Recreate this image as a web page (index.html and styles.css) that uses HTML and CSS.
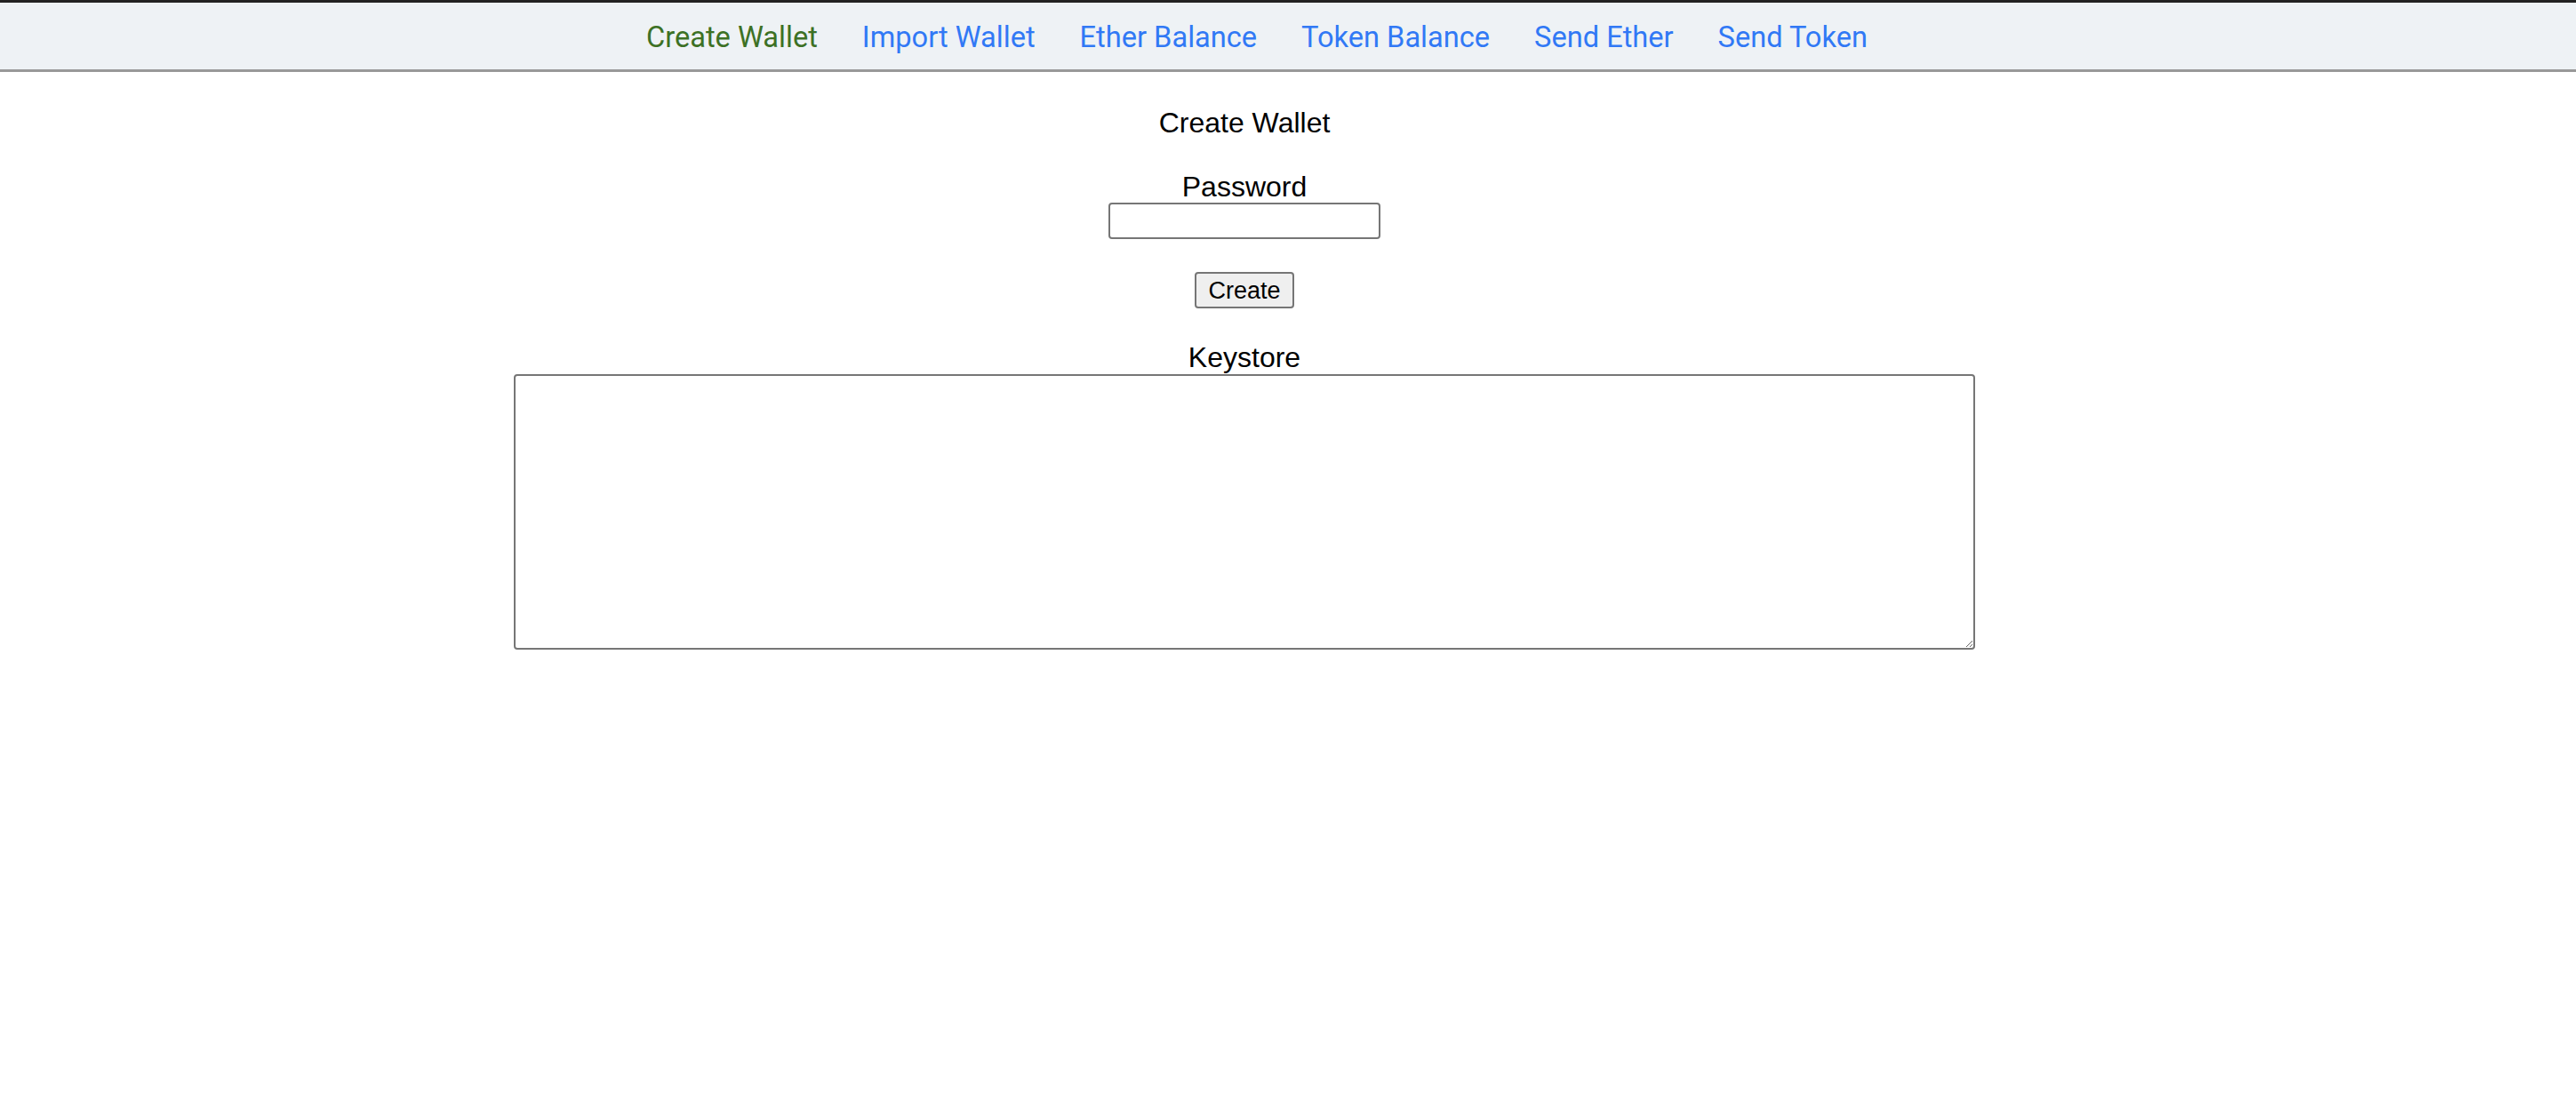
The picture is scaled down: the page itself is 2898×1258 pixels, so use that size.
FILE: index.html
```html
<!DOCTYPE html>
<html>
<head>
<meta charset="utf-8">
<title>Wallet</title>
<link rel="stylesheet" href="styles.css">
</head>
<body>
<nav class="nav">
  <a class="nav-link active" href="#">Create Wallet</a>
  <a class="nav-link" href="#">Import Wallet</a>
  <a class="nav-link" href="#">Ether Balance</a>
  <a class="nav-link" href="#">Token Balance</a>
  <a class="nav-link" href="#">Send Ether</a>
  <a class="nav-link" href="#">Send Token</a>
</nav>
<main class="main">
  <h1 class="title">Create Wallet</h1>
  <label class="label" for="pw">Password</label>
  <input class="input" id="pw" type="password">
  <button class="btn">Create</button>
  <label class="label keystore-label" for="ks">Keystore</label>
  <textarea class="textarea" id="ks"></textarea>
</main>
</body>
</html>
```
FILE: styles.css
```css
html, body {
  margin: 0;
  padding: 0;
  background: #ffffff;
}
body {
  font-family: "Liberation Sans", Arial, sans-serif;
  color: #000;
}
.nav {
  display: flex;
  align-items: center;
  gap: 50px;
  box-sizing: border-box;
  height: 81px;
  padding-left: 727px;
  padding-top: 3px;
  background: #eef2f5;
  border-top: 3px solid #222222;
  border-bottom: 3px solid #999999;
  font-family: Roboto, "Liberation Sans", sans-serif;
  font-size: 32.6px;
}
.nav-link {
  color: #3179f5;
  text-decoration: none;
  line-height: 40px;
}
.nav-link.active {
  color: #3d7125;
}
.main {
  display: flex;
  flex-direction: column;
  align-items: center;
  padding-right: 98px;
  padding-top: 39px;
}
.title {
  margin: 0;
  font-size: 32px;
  font-weight: normal;
  line-height: 37px;
}
.label {
  display: block;
  margin-top: 35px;
  font-size: 32px;
  line-height: 36px;
}
.keystore-label {
  margin-top: 37px;
  line-height: 37px;
}
.input {
  box-sizing: border-box;
  width: 306px;
  height: 41px;
  margin: 0;
  border: 2px solid #767676;
  border-radius: 4px;
  background: #fff;
}
.btn {
  box-sizing: border-box;
  height: 41px;
  width: 112px;
  margin: 37px 0 0;
  padding: 2px 0 0;
  border: 2px solid #767676;
  border-radius: 4px;
  background: #efefef;
  font-family: "Liberation Sans", Arial, sans-serif;
  font-size: 27px;
  color: #000;
}
.textarea {
  box-sizing: border-box;
  width: 1644px;
  height: 310px;
  margin: 0;
  border: 2px solid #767676;
  border-radius: 4px;
  background: #fff;
}
```
